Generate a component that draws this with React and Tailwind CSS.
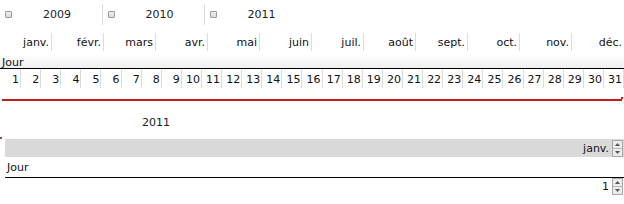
import React from "react";

const months = ["janv.", "févr.", "mars", "avr.", "mai", "juin", "juil.", "août", "sept.", "oct.", "nov.", "déc."];
const days = Array.from({ length: 31 }, (_, i) => i + 1);

function Check() {
  return (
    <span className="ml-[5px] mt-[1px] inline-block h-[7px] w-[7px] shrink-0 rounded-[1px] border border-[#9a9a9a] bg-gradient-to-b from-[#f2f2f2] to-[#d8d8d8]" />
  );
}

function Spinner() {
  return (
    <div className="flex h-[17px] w-[11px] shrink-0 flex-col border border-[#a8a8a8] bg-[#ececec]">
      <div className="flex flex-1 items-center justify-center border-b border-[#b8b8b8]">
        <svg width="5" height="3" viewBox="0 0 5 3"><path d="M0 3 L2.5 0 L5 3 Z" fill="#555" /></svg>
      </div>
      <div className="flex flex-1 items-center justify-center">
        <svg width="5" height="3" viewBox="0 0 5 3"><path d="M0 0 L2.5 3 L5 0 Z" fill="#555" /></svg>
      </div>
    </div>
  );
}

export default function App() {
  return (
    <div className="relative h-[204px] w-[624px] overflow-hidden bg-white text-[11px] leading-[13px] text-[#111]" style={{ fontFamily: '"DejaVu Sans", Verdana, sans-serif' }}>
      {/* years row */}
      <div className="flex h-[28px] items-center">
        {["2009", "2010", "2011"].map((y, i) => (
          <div key={y} className={`flex h-[21px] w-[102px] items-center ${i > 0 ? "border-l border-[#dcdcdc]" : ""}`}>
            <Check />
            <span className="flex-1 text-center text-[#222]">{y}</span>
          </div>
        ))}
      </div>
      {/* months row */}
      <div className="flex h-[28px] items-center">
        {months.map((m, i) => (
          <div key={m} className={`flex h-[18px] w-[52px] items-center justify-end pr-[2px] ${i < 11 ? "border-r border-[#dcdcdc]" : ""}`}>
            {m}
          </div>
        ))}
      </div>
      {/* Jour header */}
      <div className="flex h-[13px] items-start border-b border-black bg-gradient-to-b from-white to-[#eeeeee] pl-[2px] pt-[1px] leading-[11px]">
        Jour
      </div>
      {/* days */}
      <div className="ml-[1px] grid h-[19px] grid-cols-[repeat(31,minmax(0,1fr))]">
        {days.map((d) => (
          <div key={d} className="flex items-center justify-end border-r border-[#dcdcdc] pr-[1px] pt-[1px]">
            {d}
          </div>
        ))}
      </div>
      {/* red line */}
      <div className="relative mx-[2px] mt-[11px] h-[2px] bg-[#c21d1d]">
        <div className="absolute right-[-1px] top-[-2px] h-[2px] w-[2px] bg-[#c21d1d]" />
      </div>

      {/* second section */}
      <div className="mt-[11px] flex h-[20px] w-[312px] items-center justify-center text-[#222]">2011</div>
      <div className="mt-[7px] ml-[5px] flex h-[18px] items-center justify-end gap-[3px] bg-[#d9d9d9] pr-[1px]">
        <span>janv.</span>
        <Spinner />
      </div>
      <div className="ml-[5px] flex h-[21px] items-center border-b border-black pl-[2px]">Jour</div>
      <div className="ml-[5px] flex h-[17px] items-center justify-end gap-[3px] pr-[1px]">
        <span>1</span>
        <Spinner />
      </div>
      <div className="absolute left-0 top-[137px] h-[2px] w-[2px] bg-[#b0307a]" />
    </div>
  );
}
